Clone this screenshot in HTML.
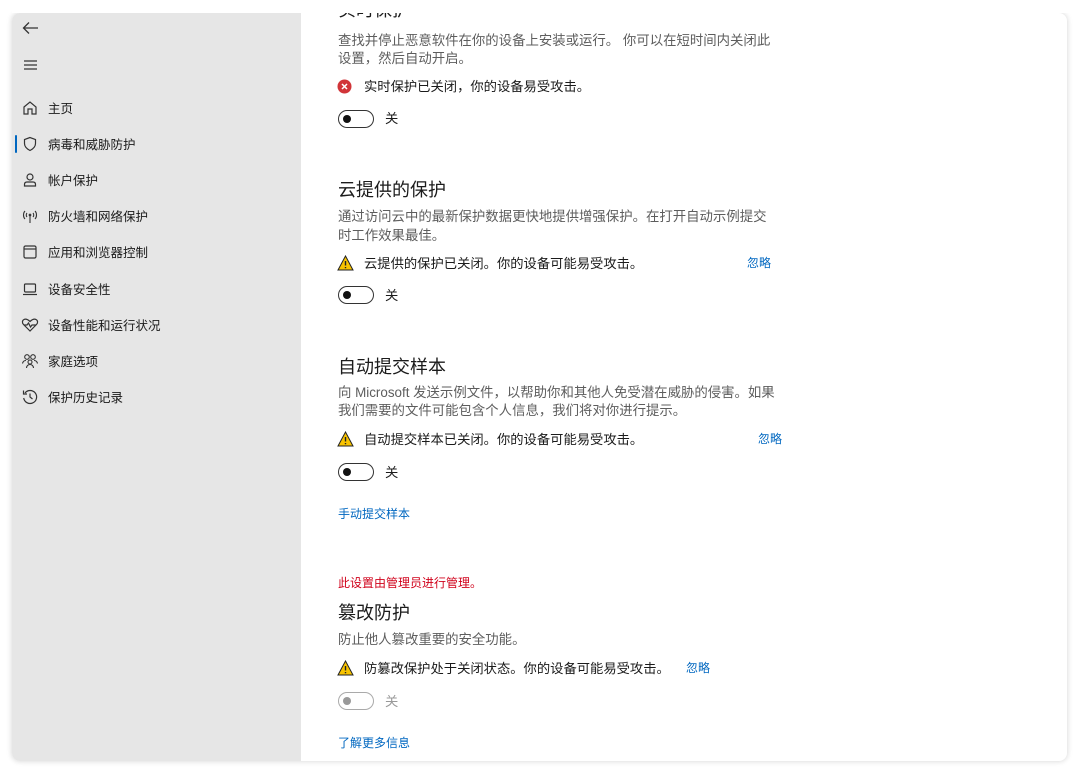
<!DOCTYPE html>
<html><head><meta charset="utf-8"><style>
body{margin:0;width:1080px;height:774px;background:#fff;overflow:hidden;font-family:"Liberation Sans","Noto Sans CJK SC",sans-serif;position:relative}
.win{position:absolute;left:12px;top:13px;width:1055px;height:748px;border-radius:8px;overflow:hidden;background:#fff;box-shadow:0 0 6px rgba(0,0,0,.18)}
.side{position:absolute;left:0;top:0;width:289px;height:100%;background:#e6e6e6}
.t{position:absolute;white-space:nowrap;line-height:1}
.nav{font-size:12.5px;color:#1a1a1a}
.ic{position:absolute}
.d{font-size:13.4px;color:#5d5d5d}
.h{font-size:18px;color:#1b1b1b}
.m{font-size:13.3px;color:#1b1b1b}
.l{font-size:12px;color:#0067c0}
.tg{position:absolute;width:34px;height:16px;border:1.5px solid #333;border-radius:10px}
.tg::after{content:"";position:absolute;left:4px;top:4px;width:8px;height:8px;border-radius:50%;background:#111}
.tg.dis{border-color:#aaa}.tg.dis::after{background:#999}
</style></head><body>
<div class="win">
<div class="side">
<svg class="ic" style="left:10px;top:8px" width="18" height="14" viewBox="0 0 18 14"><path d="M16 7H2M7 1.5 1.5 7 7 12.5" fill="none" stroke="#333" stroke-width="1.3"/></svg>
<svg class="ic" style="left:11px;top:46px" width="16" height="12"><path d="M1 2h13M1 6h13M1 10h13" stroke="#333" stroke-width="1.2"/></svg>
<div style="position:absolute;left:3px;top:122px;width:2px;height:18px;background:#0067c0;border-radius:1px"></div>
<svg class="ic" style="left:10px;top:87px" width="16" height="16" viewBox="0 0 16 16" fill="none" stroke="#333" stroke-width="1.2"><path d="M2 7 8 2l6 5v7H10V9H6v5H2z"/></svg>
<svg class="ic" style="left:10px;top:123px" width="16" height="16" viewBox="0 0 16 16" fill="none" stroke="#333" stroke-width="1.2"><path d="M8 1.5 2.5 3.5v4c0 3.5 2.5 5.5 5.5 7 3-1.5 5.5-3.5 5.5-7v-4z"/></svg>
<svg class="ic" style="left:10px;top:159px" width="16" height="16" viewBox="0 0 16 16" fill="none" stroke="#333" stroke-width="1.2"><circle cx="8" cy="5" r="3"/><path d="M2.5 14v-1.5c0-1.5 1-2.5 2.5-2.5h6c1.5 0 2.5 1 2.5 2.5V14z"/></svg>
<svg class="ic" style="left:9px;top:195px" width="18" height="16" viewBox="0 0 18 16" fill="none" stroke="#333" stroke-width="1.1"><path d="M4 3c-2 2-2 6 0 8M14 3c2 2 2 6 0 8M6 5c-1 1-1 3 0 4M12 5c1 1 1 3 0 4M9 7v8"/><circle cx="9" cy="7" r=".8"/></svg>
<svg class="ic" style="left:10px;top:231px" width="16" height="16" viewBox="0 0 16 16" fill="none" stroke="#333" stroke-width="1.2"><rect x="2" y="2" width="12" height="12" rx="1.5"/><path d="M2 5h12"/></svg>
<svg class="ic" style="left:10px;top:268px" width="16" height="16" viewBox="0 0 16 16" fill="none" stroke="#333" stroke-width="1.2"><rect x="2.5" y="3" width="11" height="8" rx="1"/><path d="M1 13.5h14"/></svg>
<svg class="ic" style="left:9px;top:304px" width="18" height="16" viewBox="0 0 18 16" fill="none" stroke="#333" stroke-width="1.2"><path d="M9 14 2.5 7.5C1 6 1 3.5 3 2.5c1.5-.8 3.5-.3 6 2 2.5-2.3 4.5-2.8 6-2 2 1 2 3.5.5 5z"/><path d="M3 8h3l1.5-2 2 4 1.5-2h4"/></svg>
<svg class="ic" style="left:9px;top:340px" width="18" height="16" viewBox="0 0 18 16" fill="none" stroke="#333" stroke-width="1.1"><circle cx="6" cy="4" r="2.3"/><circle cx="12" cy="4" r="2.3"/><circle cx="9" cy="9" r="2"/><path d="M1.5 10.5C2 8 3.5 7.5 5 7.5M16.5 10.5c-.5-2.5-2-3-3.5-3M5.5 15c0-2 1.5-3.5 3.5-3.5s3.5 1.5 3.5 3.5"/></svg>
<svg class="ic" style="left:10px;top:376px" width="16" height="16" viewBox="0 0 16 16" fill="none" stroke="#333" stroke-width="1.2"><path d="M3 4A6.5 6.5 0 1 1 1.7 9"/><path d="M1.5 1.5V5H5M8 4.5V8l2.5 2"/></svg>
<div class="t nav" style="left:36px;top:90px">主页</div>
<div class="t nav" style="left:36px;top:126px">病毒和威胁防护</div>
<div class="t nav" style="left:36px;top:162px">帐户保护</div>
<div class="t nav" style="left:36px;top:198px">防火墙和网络保护</div>
<div class="t nav" style="left:36px;top:234px">应用和浏览器控制</div>
<div class="t nav" style="left:36px;top:271px">设备安全性</div>
<div class="t nav" style="left:36px;top:307px">设备性能和运行状况</div>
<div class="t nav" style="left:36px;top:343px">家庭选项</div>
<div class="t nav" style="left:36px;top:379px">保护历史记录</div>
</div>
</div>
<div class="t h" style="left:338px;top:1px">实时保护</div>
<div style="position:absolute;left:12px;top:0;width:1068px;height:13px;background:#fff"></div>
<div class="t d" style="left:338px;top:34px">查找并停止恶意软件在你的设备上安装或运行。 你可以在短时间内关闭此</div>
<div class="t d" style="left:338px;top:52px">设置，然后自动开启。</div>
<svg class="ic" style="left:337px;top:79px" width="15" height="15"><circle cx="7.5" cy="7.5" r="7" fill="#d13438"/><path d="M5 5l5 5M10 5l-5 5" stroke="#fff" stroke-width="1.5"/></svg>
<div class="t m" style="left:364px;top:80px">实时保护已关闭，你的设备易受攻击。</div>
<div class="tg" style="left:338px;top:110px"></div><div class="t m" style="left:385px;top:112px">关</div>

<div class="t h" style="left:338px;top:181px">云提供的保护</div>
<div class="t d" style="left:338px;top:210px">通过访问云中的最新保护数据更快地提供增强保护。在打开自动示例提交</div>
<div class="t d" style="left:338px;top:229px">时工作效果最佳。</div>
<svg class="ic" style="left:337px;top:255px" width="17" height="16"><path d="M8.5 1 16 15H1z" fill="#f8c300" stroke="#222" stroke-width="1"/><path d="M8.5 6v4.5M8.5 12v1.2" stroke="#222" stroke-width="1.4"/></svg>
<div class="t m" style="left:364px;top:257px">云提供的保护已关闭。你的设备可能易受攻击。</div>
<div class="t l" style="left:747px;top:257px">忽略</div>
<div class="tg" style="left:338px;top:286px"></div><div class="t m" style="left:385px;top:289px">关</div>

<div class="t h" style="left:338px;top:358px">自动提交样本</div>
<div class="t d" style="left:338px;top:386px">向 Microsoft 发送示例文件，以帮助你和其他人免受潜在威胁的侵害。如果</div>
<div class="t d" style="left:338px;top:404px">我们需要的文件可能包含个人信息，我们将对你进行提示。</div>
<svg class="ic" style="left:337px;top:431px" width="17" height="16"><path d="M8.5 1 16 15H1z" fill="#f8c300" stroke="#222" stroke-width="1"/><path d="M8.5 6v4.5M8.5 12v1.2" stroke="#222" stroke-width="1.4"/></svg>
<div class="t m" style="left:364px;top:433px">自动提交样本已关闭。你的设备可能易受攻击。</div>
<div class="t l" style="left:758px;top:433px">忽略</div>
<div class="tg" style="left:338px;top:463px"></div><div class="t m" style="left:385px;top:466px">关</div>
<div class="t l" style="left:338px;top:508px">手动提交样本</div>

<div class="t" style="left:338px;top:577px;font-size:12px;color:#d0021b">此设置由管理员进行管理。</div>
<div class="t h" style="left:338px;top:604px">篡改防护</div>
<div class="t d" style="left:338px;top:633px">防止他人篡改重要的安全功能。</div>
<svg class="ic" style="left:337px;top:660px" width="17" height="16"><path d="M8.5 1 16 15H1z" fill="#f8c300" stroke="#222" stroke-width="1"/><path d="M8.5 6v4.5M8.5 12v1.2" stroke="#222" stroke-width="1.4"/></svg>
<div class="t m" style="left:364px;top:662px">防篡改保护处于关闭状态。你的设备可能易受攻击。</div>
<div class="t l" style="left:686px;top:662px">忽略</div>
<div class="tg dis" style="left:338px;top:692px"></div><div class="t m" style="left:385px;top:695px;color:#999">关</div>
<div class="t l" style="left:338px;top:737px">了解更多信息</div>
</body></html>
